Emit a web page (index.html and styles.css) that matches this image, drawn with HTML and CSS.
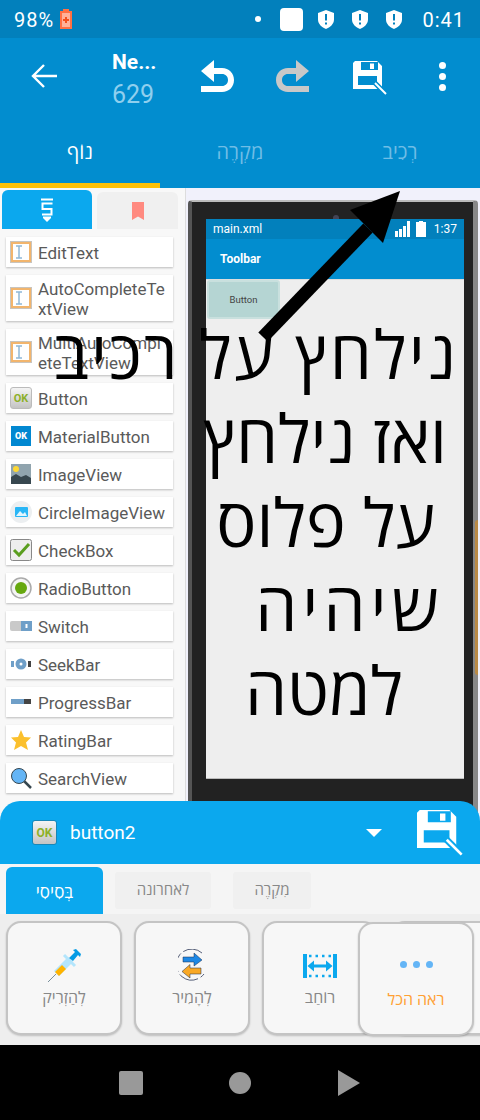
FILE: index.html
```html
<!DOCTYPE html>
<html lang="he">
<head>
    <meta charset="UTF-8">
    <title>Sketchware</title>
    <link rel="stylesheet" href="styles.css">
</head>
<body>
    <svg class="defs" width="0" height="0">
        <symbol id="save" viewBox="0 0 34 34">
            <path fill="currentColor" fill-rule="evenodd" d="M2 0H24L29 5V28H0V2ZM8 1V9H25V1ZM17 2.500H21V8H17ZM5 15V24H24V15Z"/>
            <path class="save-cut" stroke-width="5" d="M20 20L33 33"/>
            <path stroke="currentColor" stroke-width="2" d="M22 22L33 33"/>
        </symbol>
        <symbol id="shield" viewBox="0 0 16 19">
            <path fill="#fff" fill-rule="evenodd" d="M8 0L16 3V9.500C16 14 12 17.500 8 19C4 17.500 0 14 0 9.500V3ZM7 4V10.500H9V4ZM7 12.500V14.500H9V12.500Z"/>
        </symbol>
        <symbol id="edit" viewBox="0 0 22 22">
            <rect width="22" height="22" fill="#c9c4bd"/>
            <rect x="2" y="2" width="18" height="18" fill="#fff" stroke="#f2b56d" stroke-width="2"/>
            <path fill="none" stroke="#8fb8d8" stroke-width="1.500" d="M6 5H12M9 5V17M6 17H12"/>
        </symbol>
    </svg>

    <div class="status-bar">
        <span class="status-text">98%</span>
        <svg class="battery" width="12" height="20" viewBox="0 0 12 20">
            <path fill="#ff7043" d="M3 0H9V2H12V20H0V2H3Z"/>
            <rect x="2" y="4" width="8" height="14" fill="#ffb199"/>
            <path stroke="#f4511e" stroke-width="2" d="M6 8V14M3 11H9"/>
        </svg>
        <span class="status-fill"></span>
        <span class="status-dot"></span>
        <span class="status-square"></span>
        <svg class="shield"><use href="#shield"/></svg>
        <svg class="shield"><use href="#shield"/></svg>
        <svg class="shield"><use href="#shield"/></svg>
        <span class="status-text status-time">0:41</span>
    </div>

    <div class="app-bar">
        <div class="toolbar">
            <svg class="back" width="26" height="26" viewBox="0 0 26 26">
                <path fill="none" stroke="#fff" stroke-width="2.400" d="M26 13H2M13 2L2 13L13 24"/>
            </svg>
            <div class="project">
                <div class="project-name">Ne...</div>
                <div class="project-id">629</div>
            </div>
            <svg class="undo" width="34" height="32" viewBox="0 0 34 32">
                <path fill="#fff" d="M14 0V8H22C29 8 34 13 34 20C34 27 29 32 22 32H1V26H22C25.500 26 28 23.500 28 20C28 16.500 25.500 14 22 14H14V22L1 11Z"/>
            </svg>
            <svg class="redo" width="34" height="32" viewBox="0 0 34 32">
                <path fill="#c8c8c8" d="M20 0V8H12C5 8 0 13 0 20C0 27 5 32 12 32H33V26H12C8.500 26 6 23.500 6 20C6 16.500 8.500 14 12 14H20V22L33 11Z"/>
            </svg>
            <svg class="save-top"><use href="#save"/></svg>
            <div class="more"><span></span><span></span><span></span></div>
        </div>
        <div class="tabs">
            <div class="tab tab-on">נוֹף</div>
            <div class="tab">מִקְרֶה</div>
            <div class="tab">רְכִיב</div>
        </div>
    </div>

    <div class="main">
        <div class="palette">
            <div class="palette-tabs">
                <div class="palette-tab palette-tab-on">
                    <svg width="14" height="24" viewBox="0 0 14 24">
                        <path fill="none" stroke="#fff" stroke-width="2" d="M1 1.500H13M12.500 5.500H2.500V11H11.500V16.500H2"/>
                        <path fill="#fff" d="M3 18.500H11V20L7 24L3 20Z"/>
                    </svg>
                </div>
                <div class="palette-tab">
                    <svg width="14" height="18" viewBox="0 0 14 18">
                        <path fill="#ff8a80" d="M1 0H13V18L7 14.500L1 18Z"/>
                    </svg>
                </div>
            </div>
            <div class="widgets">
                <div class="widget-stub"></div>
                <div class="widget"><svg class="icon"><use href="#edit"/></svg><span class="widget-name">EditText</span></div>
                <div class="widget widget-tall"><svg class="icon"><use href="#edit"/></svg><span class="widget-name">AutoCompleteTextView</span></div>
                <div class="widget widget-tall"><svg class="icon"><use href="#edit"/></svg><span class="widget-name">MultiAutoCompleteTextView</span></div>
                <div class="widget"><span class="icon icon-ok">OK</span><span class="widget-name">Button</span></div>
                <div class="widget"><span class="icon icon-ok icon-material">OK</span><span class="widget-name">MaterialButton</span></div>
                <div class="widget">
                    <svg class="icon" viewBox="0 0 22 22">
                        <rect x="1" y="1" width="20" height="20" fill="#90a4ae"/>
                        <circle cx="6" cy="6" r="3" fill="#fdd835"/>
                        <path fill="#37474f" d="M1 21V14L6 11L11 14L16 12L21 15V21Z"/>
                    </svg>
                    <span class="widget-name">ImageView</span>
                </div>
                <div class="widget">
                    <svg class="icon" viewBox="0 0 22 22">
                        <circle cx="11" cy="11" r="11" fill="#eceff1"/>
                        <rect x="5" y="6" width="13" height="10" rx="1" fill="#29b6f6"/>
                        <path fill="#e1f5fe" d="M6 15L10 10L13 13L15 11L17 15Z"/>
                    </svg>
                    <span class="widget-name">CircleImageView</span>
                </div>
                <div class="widget">
                    <svg class="icon" viewBox="0 0 22 22">
                        <rect x="0.500" y="0.500" width="21" height="21" rx="2" fill="#eee" stroke="#888"/>
                        <path fill="none" stroke="#5a9e1f" stroke-width="3" d="M4 11L9 16L19 5"/>
                    </svg>
                    <span class="widget-name">CheckBox</span>
                </div>
                <div class="widget">
                    <svg class="icon" viewBox="0 0 22 22">
                        <circle cx="11" cy="11" r="10" fill="#f5f5f5" stroke="#aaa" stroke-width="1.500"/>
                        <circle cx="11" cy="11" r="6" fill="#66a80f"/>
                    </svg>
                    <span class="widget-name">RadioButton</span>
                </div>
                <div class="widget">
                    <svg class="icon" viewBox="0 0 22 22">
                        <rect y="6" width="13" height="10" rx="2" fill="#c9c9c9"/>
                        <rect x="11" y="6" width="11" height="10" fill="#6f9fc8"/>
                        <rect x="15.500" y="9" width="2" height="4" fill="#fff"/>
                    </svg>
                    <span class="widget-name">Switch</span>
                </div>
                <div class="widget">
                    <svg class="icon" viewBox="0 0 22 22">
                        <rect x="1" y="8" width="3" height="6" fill="#6f9fc8"/>
                        <circle cx="11" cy="11" r="5.500" fill="#6f9fc8"/>
                        <circle cx="11" cy="11" r="1.500" fill="#fff"/>
                        <rect x="18" y="8" width="3" height="6" fill="#444"/>
                    </svg>
                    <span class="widget-name">SeekBar</span>
                </div>
                <div class="widget">
                    <svg class="icon" viewBox="0 0 22 22">
                        <rect x="1" y="8" width="14" height="5" fill="#6f9fc8"/>
                        <rect x="14" y="8" width="7" height="5" fill="#444"/>
                    </svg>
                    <span class="widget-name">ProgressBar</span>
                </div>
                <div class="widget">
                    <svg class="icon" viewBox="0 0 22 22">
                        <path fill="#fbc02d" d="M11 1L14 8L21 8.500L16 13.500L18 21L11 17L4 21L6 13.500L1 8.500L8 8Z"/>
                    </svg>
                    <span class="widget-name">RatingBar</span>
                </div>
                <div class="widget">
                    <svg class="icon" viewBox="0 0 22 22">
                        <path stroke="#37474f" stroke-width="2.500" d="M14 14L21 21"/>
                        <circle cx="9" cy="9" r="7.500" fill="#64b5f6" stroke="#37474f"/>
                    </svg>
                    <span class="widget-name">SearchView</span>
                </div>
            </div>
        </div>

        <div class="canvas">
            <div class="device">
                <span class="device-key"></span>
                <span class="device-camera"></span>
                <div class="screen">
                    <div class="screen-status">
                        <span>main.xml</span>
                        <span class="screen-fill"></span>
                        <svg width="17" height="16" viewBox="0 0 17 16">
                            <path fill="#fff" d="M0 10H3V16H0ZM4 8H7V16H4ZM8 5H11V16H8ZM12 0H15V16H12Z"/>
                        </svg>
                        <svg width="10" height="16" viewBox="0 0 10 16">
                            <path fill="#fff" d="M3 0H7V1H10V16H0V1H3Z"/>
                        </svg>
                        <span>1:37</span>
                    </div>
                    <div class="screen-toolbar">Toolbar</div>
                    <div class="screen-body">
                        <div class="screen-button">Button</div>
                    </div>
                </div>
            </div>
        </div>

        <div class="note">
            <div class="note-line note-a">נילחץ על רכיב</div>
            <div class="note-line note-b">ואז נילחץ</div>
            <div class="note-line note-c">על פלוס</div>
            <div class="note-line note-d">שיהיה</div>
            <div class="note-line note-e">למטה</div>
        </div>
        <svg class="arrow" width="480" height="200" viewBox="0 188 480 200">
            <path fill="none" stroke="#000" stroke-width="13" d="M263 337L368 228"/>
            <path fill="#000" d="M400 191L383 243L350 210Z"/>
        </svg>
    </div>

    <div class="sheet">
        <div class="sheet-head">
            <span class="icon icon-ok icon-ok-head">OK</span>
            <span class="sheet-title">button2</span>
            <span class="sheet-fill"></span>
            <span class="caret"></span>
            <svg class="save-sheet"><use href="#save"/></svg>
        </div>
        <div class="sheet-tabs">
            <div class="sheet-tab sheet-tab-on">בְּסִיסִי</div>
            <div class="sheet-tab sheet-tab-b">לאחרונה</div>
            <div class="sheet-tab sheet-tab-c">מִקְרֶה</div>
        </div>
        <div class="actions">
            <div class="action">
                <svg width="34" height="34" viewBox="0 0 34 34">
                    <path stroke="#78909c" stroke-width="1" d="M1 33L9 25"/>
                    <path fill="#b3e5fc" d="M7 22L21 8L26 13L12 27Z"/>
                    <path fill="#ffb300" d="M8 23L15 16L19 20L12 27Z"/>
                    <path stroke="#b3e5fc" stroke-width="3" d="M17 6L28 17"/>
                    <path fill="#039be5" d="M22 9L28 3L26 1L29 0L34 5L33 8L31 6L26 12Z"/>
                </svg>
                <span class="action-label">לְהַזְרִיק</span>
            </div>
            <div class="action">
                <svg width="28" height="34" viewBox="0 0 28 34">
                    <path fill="none" stroke="#2e3a59" stroke-width="0.800" stroke-dasharray="20 3" d="M24 4A15.500 15.500 0 1 0 26 25"/>
                    <path fill="#1e88e5" stroke="#1a2a4a" stroke-width="0.500" d="M5 8H16V4L24 11L16 17V13H5Z"/>
                    <path fill="#f9a825" stroke="#1a2a4a" stroke-width="0.500" d="M23 19H12V15.500L4 22.500L12 29V25H23Z"/>
                </svg>
                <span class="action-label">לְהָמִיר</span>
            </div>
            <div class="action">
                <svg class="width-icon" width="34" height="24" viewBox="0 0 34 24">
                    <path fill="#0ba8ee" d="M0 0H4V24H0ZM30 0H34V24H30Z"/>
                    <path stroke="#0ba8ee" stroke-width="2.400" stroke-dasharray="2.500 4" d="M6 2H30M6 22H30"/>
                    <path fill="#0ba8ee" d="M4.500 12L11 6.500V10.500H23V6.500L29.500 12L23 17.500V13.500H11V17.500Z"/>
                </svg>
                <span class="action-label">רוֹחַב</span>
            </div>
            <div class="action"></div>
            <div class="action action-all">
                <div class="dots"><span></span><span></span><span></span></div>
                <span class="action-label action-label-all">ראה הכל</span>
            </div>
        </div>
    </div>

    <div class="nav-bar">
        <span class="nav-square"></span>
        <span class="nav-circle"></span>
        <svg width="24" height="26" viewBox="0 0 24 26">
            <path fill="#999" d="M1 0L23 13L1 26Z"/>
        </svg>
    </div>
</body>
</html>
```

FILE: styles.css
```css
* {
    margin: 0;
    padding: 0;
    box-sizing: border-box;
}

html, body {
    width: 480px;
    height: 1120px;
    overflow: hidden;
}

body {
    display: flex;
    flex-direction: column;
    background: #f5f5f5;
    font-family: Roboto, "Open Sans", sans-serif;
}

.defs {
    position: absolute;
}

.save-cut {
    stroke: var(--cut);
}

/* status bar */
.status-bar {
    height: 38px;
    display: flex;
    align-items: center;
    padding: 0 15px 0 14px;
    background: #0280bc;
    color: #fff;
}

.status-text {
    padding-top: 2px;
    font-size: 20px;
    letter-spacing: 1px;
}

.battery {
    margin-left: 6px;
}

.status-fill {
    flex: 1;
}

.status-dot {
    width: 6px;
    height: 6px;
    border-radius: 50%;
    background: #fff;
}

.status-square {
    width: 23px;
    height: 23px;
    margin-left: 19px;
    border-radius: 4px;
    background: #fff;
}

.shield {
    width: 16px;
    height: 19px;
    margin-left: 18px;
}

.status-bar .status-square + .shield {
    margin-left: 15px;
}

.status-time {
    margin-left: 20px;
}

/* app bar */
.app-bar {
    height: 150px;
    background: #028dcf;
    display: flex;
    flex-direction: column;
}

.toolbar {
    height: 83px;
    display: flex;
    align-items: flex-start;
    position: relative;
    color: #fff;
}

.back {
    margin: 25px 0 0 31px;
}

.project {
    width: 88px;
    margin: 11px 0 0 55px;
}

.project-name {
    font-size: 21px;
    font-weight: 700;
    line-height: 26px;
}

.project-id {
    margin-top: 5px;
    font-size: 25px;
    line-height: 30px;
    color: #8fcfee;
}

.undo {
    margin: 22px 0 0 0;
}

.redo {
    margin: 22px 0 0 42px;
}

.save-top {
    --cut: #028dcf;
    width: 34px;
    height: 34px;
    margin: 23px 0 0 43px;
}

.more {
    display: flex;
    flex-direction: column;
    gap: 4px;
    margin: 24px 0 0 52px;
}

.more span {
    width: 7px;
    height: 7px;
    border-radius: 50%;
    background: #fff;
}

.tabs {
    flex: 1;
    display: flex;
}

.tab {
    flex: 1;
    padding-top: 16px;
    text-align: center;
    font-size: 20px;
    line-height: 30px;
    color: #6fbde6;
}

.tab-on {
    color: #fff;
    border-bottom: 5px solid #ffc107;
}

/* palette */
.main {
    height: 633px;
    display: flex;
    position: relative;
    overflow: hidden;
}

.palette {
    width: 186px;
    flex: none;
    background: #f8f8f8;
    border-right: 1px solid #ddd;
}

.palette-tabs {
    display: flex;
    gap: 5px;
    height: 41px;
    padding: 2px 0 0 2px;
}

.palette-tab {
    width: 81px;
    height: 37px;
    margin-top: 2px;
    border-radius: 6px 6px 0 0;
    background: #f0f0f0;
    display: flex;
    align-items: center;
    justify-content: center;
}

.palette-tab-on {
    width: 90px;
    height: 39px;
    margin-top: 0;
    background: #0ba8ee;
}

.widgets {
    display: flex;
    flex-direction: column;
    gap: 8px;
    padding-left: 6px;
    width: 173px;
}

.widget-stub {
    height: 0;
    box-shadow: 0 1px 2px rgba(0, 0, 0, 0.25);
}

.widget {
    height: 30px;
    flex: none;
    display: flex;
    align-items: center;
    gap: 6px;
    padding-left: 4px;
    background: #fff;
    box-shadow: 0 1px 2px rgba(0, 0, 0, 0.25);
}

.widget-tall {
    height: 46px;
}

.icon {
    width: 22px;
    height: 22px;
    flex: none;
}

.icon-ok {
    display: flex;
    align-items: center;
    justify-content: center;
    border: 1px solid #bbb;
    border-radius: 3px;
    background: linear-gradient(#f4f4f4, #c4c4c4);
    color: #8db02a;
    font-size: 11px;
    font-weight: 700;
}

.icon-material {
    border: 0;
    border-radius: 0;
    background: #0288d1;
    color: #fff;
    font-size: 9px;
    font-weight: 900;
    width: 20px;
    height: 20px;
    margin: 0 1px;
}

.widget-name {
    width: 130px;
    padding-top: 2px;
    font-size: 17px;
    line-height: 20px;
    color: #5a5a5a;
    word-break: break-all;
}

/* phone preview */
.canvas {
    flex: 1;
    background: #f1f1fb;
    padding: 12px 2px 0 2px;
}

.device {
    height: 640px;
    position: relative;
    padding: 17px 9px 0 14px;
    background: #222;
    border-top: 2px solid #bbb;
    border-left: 4px solid #555;
    border-right: 5px solid #888;
    border-radius: 4px 4px 0 0;
}

.device-key {
    position: absolute;
    right: -5px;
    top: 318px;
    width: 3px;
    height: 155px;
    border-radius: 3px 0 0 3px;
    background: #b98a45;
}

.device-camera {
    position: absolute;
    left: 141px;
    top: 13px;
    width: 6px;
    height: 4px;
    border-radius: 3px 3px 0 0;
    background: #445;
}

.screen {
    width: 258px;
    height: 560px;
    display: flex;
    flex-direction: column;
    background: #eee;
    border-bottom: 1px solid #bbb;
}

.screen-status {
    height: 20px;
    display: flex;
    align-items: center;
    gap: 4px;
    padding: 0 7px 0 7px;
    background: #0280bc;
    color: #fff;
    font-size: 12px;
}

.screen-fill {
    flex: 1;
}

.screen-status span:last-child {
    margin-left: 4px;
}

.screen-toolbar {
    height: 40px;
    padding-left: 14px;
    background: #028dcf;
    color: #fff;
    font-size: 12px;
    font-weight: 700;
    line-height: 40px;
}

.screen-body {
    flex: 1;
    padding: 0 0 0 1px;
    border-top: 1px solid #ddd;
}

.screen-button {
    width: 73px;
    height: 39px;
    border: 2px solid #c9e0de;
    border-radius: 3px;
    background: #b5d5d3;
    color: #444;
    font-size: 9.5px;
    line-height: 35px;
    text-align: center;
}

/* annotation drawn over the preview */
.note {
    position: absolute;
    top: 123px;
    right: 0;
    left: 0;
    direction: rtl;
    color: #000;
    font-family: "Open Sans", sans-serif;
    font-size: 67px;
    line-height: 84px;
}

.note-line {
    white-space: nowrap;
}

.note-a { padding-right: 22px; letter-spacing: 2.2px; }
.note-b { padding-right: 33px; }
.note-c { padding-right: 45px; }
.note-d { padding-right: 36px; letter-spacing: 5px; }
.note-e { padding-right: 77px; }

.arrow {
    position: absolute;
    top: 0;
    left: 0;
}

/* bottom sheet */
.sheet {
    margin-top: -20px;
    position: relative;
    display: flex;
    flex-direction: column;
}

.sheet-head {
    height: 63px;
    display: flex;
    align-items: center;
    padding-left: 32px;
    border-radius: 20px 20px 0 0;
    background: #0ba8ee;
    color: #fff;
}

.icon-ok-head {
    width: 25px;
    height: 25px;
    border-color: #1787b8;
    font-size: 12px;
}

.sheet-title {
    width: 65px;
    margin-left: 13px;
    font-size: 19px;
}

.sheet-fill {
    flex: 1;
}

.caret {
    border-top: 8px solid #fff;
    border-left: 8px solid transparent;
    border-right: 8px solid transparent;
}

.save-sheet {
    --cut: #0ba8ee;
    width: 46px;
    height: 46px;
    margin: 0 17px 0 35px;
}

.sheet-tabs {
    height: 50px;
    display: flex;
    align-items: flex-end;
    padding-left: 6px;
    background: #f5f5f5;
}

.sheet-tab {
    height: 37px;
    margin-bottom: 5px;
    border-radius: 3px;
    background: #f0f0f0;
    color: #888;
    font-size: 15px;
    line-height: 37px;
    text-align: center;
}

.sheet-tab-on {
    width: 97px;
    height: 47px;
    margin-bottom: 0;
    border-radius: 6px 6px 0 0;
    background: #0ba8ee;
    color: #fff;
    font-size: 17px;
    line-height: 50px;
}

.sheet-tab-b {
    width: 96px;
    margin-left: 12px;
}

.sheet-tab-c {
    width: 78px;
    margin-left: 22px;
}

.actions {
    height: 131px;
    display: flex;
    gap: 12px;
    position: relative;
    overflow: hidden;
    padding: 7px 0 0 6px;
    background: #eee;
}

.action {
    width: 116px;
    height: 114px;
    flex: none;
    display: flex;
    flex-direction: column;
    align-items: center;
    justify-content: flex-end;
    gap: 3px;
    padding-bottom: 23px;
    border: 2px solid #c4c4c4;
    border-radius: 15px;
    background: #f7f7f7;
    box-shadow: 0 1px 2px rgba(0, 0, 0, 0.2);
}

.width-icon {
    margin-bottom: 5px;
}

.action-all {
    position: absolute;
    left: 358px;
    top: 8px;
    padding-bottom: 22px;
}

.action-label {
    color: #888;
    font-size: 16px;
    line-height: 24px;
}

.action-label-all {
    color: #ffa033;
}

.dots {
    display: flex;
    gap: 6px;
    height: 28px;
    margin-bottom: 7px;
    align-items: center;
}

.dots span {
    width: 7px;
    height: 7px;
    border-radius: 50%;
    background: #64b5f6;
}

/* navigation bar */
.nav-bar {
    flex: 1;
    display: flex;
    align-items: center;
    justify-content: center;
    gap: 86px;
    background: #000;
}

.nav-square {
    width: 24px;
    height: 24px;
    border-radius: 2px;
    background: #999;
}

.nav-circle {
    width: 22px;
    height: 22px;
    border-radius: 50%;
    background: #999;
}
```
